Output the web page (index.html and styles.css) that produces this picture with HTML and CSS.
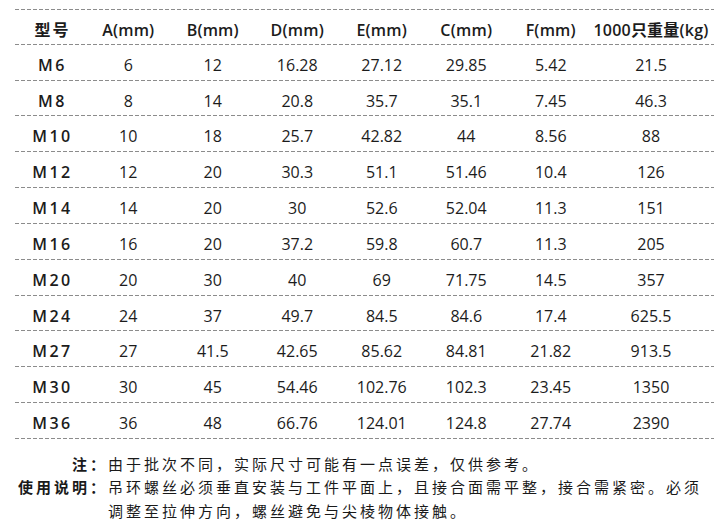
FILE: index.html
```html
<!DOCTYPE html>
<html lang="zh">
<head>
<meta charset="utf-8">
<title>吊环螺丝规格表</title>
<link rel="stylesheet" href="styles.css">
</head>
<body>
<div class="page">
  <div class="table">
    <div class="row head">
      <div class="cell first">型号</div>
      <div class="cell">A(mm)</div>
      <div class="cell">B(mm)</div>
      <div class="cell">D(mm)</div>
      <div class="cell">E(mm)</div>
      <div class="cell">C(mm)</div>
      <div class="cell">F(mm)</div>
      <div class="cell last">1000只重量(kg)</div>
    </div>
    <div class="row"><div class="cell first">M6</div><div class="cell">6</div><div class="cell">12</div><div class="cell">16.28</div><div class="cell">27.12</div><div class="cell">29.85</div><div class="cell">5.42</div><div class="cell last">21.5</div></div>
    <div class="row"><div class="cell first">M8</div><div class="cell">8</div><div class="cell">14</div><div class="cell">20.8</div><div class="cell">35.7</div><div class="cell">35.1</div><div class="cell">7.45</div><div class="cell last">46.3</div></div>
    <div class="row"><div class="cell first">M10</div><div class="cell">10</div><div class="cell">18</div><div class="cell">25.7</div><div class="cell">42.82</div><div class="cell">44</div><div class="cell">8.56</div><div class="cell last">88</div></div>
    <div class="row"><div class="cell first">M12</div><div class="cell">12</div><div class="cell">20</div><div class="cell">30.3</div><div class="cell">51.1</div><div class="cell">51.46</div><div class="cell">10.4</div><div class="cell last">126</div></div>
    <div class="row"><div class="cell first">M14</div><div class="cell">14</div><div class="cell">20</div><div class="cell">30</div><div class="cell">52.6</div><div class="cell">52.04</div><div class="cell">11.3</div><div class="cell last">151</div></div>
    <div class="row"><div class="cell first">M16</div><div class="cell">16</div><div class="cell">20</div><div class="cell">37.2</div><div class="cell">59.8</div><div class="cell">60.7</div><div class="cell">11.3</div><div class="cell last">205</div></div>
    <div class="row"><div class="cell first">M20</div><div class="cell">20</div><div class="cell">30</div><div class="cell">40</div><div class="cell">69</div><div class="cell">71.75</div><div class="cell">14.5</div><div class="cell last">357</div></div>
    <div class="row"><div class="cell first">M24</div><div class="cell">24</div><div class="cell">37</div><div class="cell">49.7</div><div class="cell">84.5</div><div class="cell">84.6</div><div class="cell">17.4</div><div class="cell last">625.5</div></div>
    <div class="row"><div class="cell first">M27</div><div class="cell">27</div><div class="cell">41.5</div><div class="cell">42.65</div><div class="cell">85.62</div><div class="cell">84.81</div><div class="cell">21.82</div><div class="cell last">913.5</div></div>
    <div class="row"><div class="cell first">M30</div><div class="cell">30</div><div class="cell">45</div><div class="cell">54.46</div><div class="cell">102.76</div><div class="cell">102.3</div><div class="cell">23.45</div><div class="cell last">1350</div></div>
    <div class="row"><div class="cell first">M36</div><div class="cell">36</div><div class="cell">48</div><div class="cell">66.76</div><div class="cell">124.01</div><div class="cell">124.8</div><div class="cell">27.74</div><div class="cell last">2390</div></div>
  </div>
  <div class="notes">
    <div class="note">
      <div class="label">注：</div>
      <div class="text">由于批次不同，实际尺寸可能有一点误差，仅供参考。</div>
    </div>
    <div class="note">
      <div class="label">使用说明：</div>
      <div class="text">吊环螺丝必须垂直安装与工件平面上，且接合面需平整，接合需紧密。必须调整至拉伸方向，螺丝避免与尖棱物体接触。</div>
    </div>
  </div>
</div>
</body>
</html>
```

FILE: styles.css
```css
html, body {
  margin: 0;
  padding: 0;
  background: #ffffff;
}

body {
  width: 722px;
  height: 526px;
  overflow: hidden;
  font-family: "Open Sans", "Noto Sans CJK SC", sans-serif;
  color: #1c1c1c;
}

.page {
  padding-top: 9px;
}

.table {
  margin-left: 15px;
  width: 699px;
  background-image: repeating-linear-gradient(to right, #8c8c8c 0 4px, transparent 4px 6px);
  background-size: 100% 1px;
  background-repeat: no-repeat;
  background-position: top left;
}

.row {
  display: grid;
  grid-template-columns: 71px repeat(6, 84.5px) 1fr;
  align-items: center;
  height: 35.83px;
  box-sizing: border-box;
  padding-top: 4px;
  background-image: repeating-linear-gradient(to right, #8c8c8c 0 4px, transparent 4px 6px);
  background-size: 100% 1px;
  background-repeat: no-repeat;
  background-position: bottom left;
  font-size: 16px;
  line-height: 20px;
}

.row.head {
  padding-top: 6px;
}

.cell {
  text-align: center;
  white-space: nowrap;
}

.cell.first {
  padding-left: 4px;
  font-weight: 600;
  font-size: 16px;
  letter-spacing: 2.5px;
}

.cell.last {
  padding-right: 5px;
}

.head .cell {
  font-size: 16px;
  font-weight: 600;
  letter-spacing: 0.2px;
}

.head .cell.first {
  font-weight: 700;
  letter-spacing: 2px;
}

.notes {
  margin-top: 14px;
  margin-left: 15px;
  font-size: 15px;
  line-height: 23.5px;
  letter-spacing: 3px;
  color: #1a1a1a;
}

.note {
  display: flex;
}

.label {
  width: 93px;
  flex: none;
  text-align: right;
  font-weight: 700;
}

.text {
  width: 606px;
  flex: none;
}
```
